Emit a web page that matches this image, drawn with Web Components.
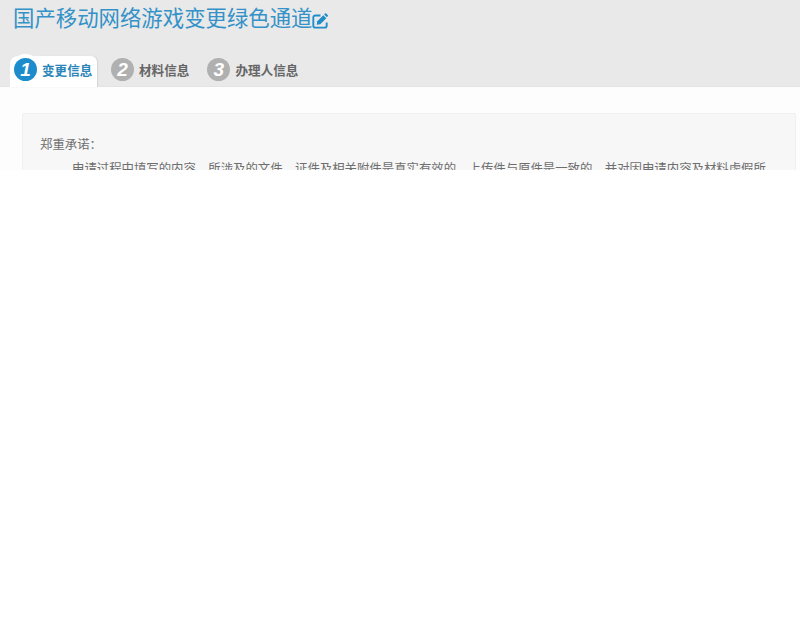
<!DOCTYPE html>
<html lang="zh-CN">
<head>
<meta charset="utf-8">
<title>国产移动网络游戏变更绿色通道</title>
<style>
  html, body { margin: 0; padding: 0; background: #fff; }
  body { font-family: "Noto Sans CJK SC", "Liberation Sans", sans-serif; }
</style>
</head>
<body>
<change-page>
  <page-header title="国产移动网络游戏变更绿色通道">
    <step-tab num="1" active>变更信息</step-tab>
    <step-tab num="2">材料信息</step-tab>
    <step-tab num="3">办理人信息</step-tab>
  </page-header>
  <notice-panel heading="郑重承诺：">申请过程中填写的内容、所涉及的文件、证件及相关附件是真实有效的，上传件与原件是一致的，并对因申请内容及材料虚假所</notice-panel>
</change-page>

<script>
class ChangePage extends HTMLElement {
  constructor() {
    super();
    this.attachShadow({ mode: "open" });
    this.shadowRoot.innerHTML = `
      <style>
        :host {
          display: block;
          height: 170px;
          overflow: hidden;
          background: #fdfdfd;
        }
      </style>
      <slot></slot>
    `;
  }
}

class PageHeader extends HTMLElement {
  constructor() {
    super();
    this.attachShadow({ mode: "open" });
  }

  connectedCallback() {
    const title = this.getAttribute("title") || "";
    this.shadowRoot.innerHTML = `
      <style>
        :host {
          display: block;
          height: 87px;
          box-sizing: border-box;
          background: #e9e9e9;
          border-bottom: 1px solid #e4e4e4;
          padding: 1px 0 0 13px;
        }
        .title {
          display: flex;
          align-items: center;
          gap: 0;
          height: 31px;
          font-size: 21.4px;
          line-height: 31px;
          color: #3492c8;
          white-space: nowrap;
        }
        .title svg { margin-top: 8px; }
        .tabs {
          display: flex;
          margin: 24px 0 0 -3px;
          height: 31px;
        }
      </style>
      <div class="title">
        <span>${title}</span>
        <svg width="16" height="16" viewBox="0 0 17 17">
          <path d="M9 2.6H3.4A2 2 0 0 0 1.4 4.6V13.6A2 2 0 0 0 3.4 15.6H13.6A2 2 0 0 0 15.6 13.6V10" fill="none" stroke="#1f8ccb" stroke-width="2"/>
          <path d="M5 12.4L5.6 8.8L12 2.4L15.2 5.6L8.8 12Z" fill="#1f8ccb"/>
          <path d="M12.9 1.5L14 .4Q14.5 0 15 .4L16.9 2.4Q17.2 2.9 16.9 3.3L15.9 4.4Z" fill="#1f8ccb"/>
        </svg>
      </div>
      <div class="tabs"><slot></slot></div>
    `;
  }
}

class StepTab extends HTMLElement {
  constructor() {
    super();
    this.attachShadow({ mode: "open" });
  }

  connectedCallback() {
    const num = this.getAttribute("num");
    this.shadowRoot.innerHTML = `
      <style>
        :host {
          display: flex;
          align-items: center;
          box-sizing: border-box;
          height: 31px;
          padding: 0 8px 5px 0;
          gap: 5px;
          font-size: 12.6px;
          font-weight: 700;
          color: #666;
          white-space: nowrap;
        }
        :host(:not([active])) { padding-left: 14px; padding-right: 4px; }
        :host([active]) {
          width: 87px;
          padding-left: 4px;
          padding-right: 0;
          background: #fff;
          color: #2b86b9;
          border-radius: 8px 6px 0 0;
          box-shadow: 1px 0 1px #d4d4d4;
        }
        .num {
          flex: none;
          width: 23px;
          height: 23px;
          border-radius: 50%;
          background: #b0b0b0;
          color: #fff;
          font: italic 700 19px/23px "Liberation Sans", sans-serif;
          text-align: center;
        }
        :host([active]) .num {
          background: #1c8ccd;
          box-shadow: 0 0 0 4px #fff;
        }
      </style>
      <span class="num">${num}</span>
      <span><slot></slot></span>
    `;
  }
}

class NoticePanel extends HTMLElement {
  constructor() {
    super();
    this.attachShadow({ mode: "open" });
  }

  connectedCallback() {
    const heading = this.getAttribute("heading") || "";
    this.shadowRoot.innerHTML = `
      <style>
        :host {
          display: block;
          box-sizing: border-box;
          margin: 26px 4px 0 22px;
          padding: 18px 0 20px 17px;
          background: #f7f7f7;
          border: 1px solid #f0f0f0;
          border-radius: 2px;
          font-size: 12.4px;
          line-height: 24px;
          color: #6e6e6e;
        }
        .body { padding-left: 32px; white-space: nowrap; }
      </style>
      <div>${heading}</div>
      <div class="body"><slot></slot></div>
    `;
  }
}

customElements.define("change-page", ChangePage);
customElements.define("page-header", PageHeader);
customElements.define("step-tab", StepTab);
customElements.define("notice-panel", NoticePanel);
</script>
</body>
</html>
